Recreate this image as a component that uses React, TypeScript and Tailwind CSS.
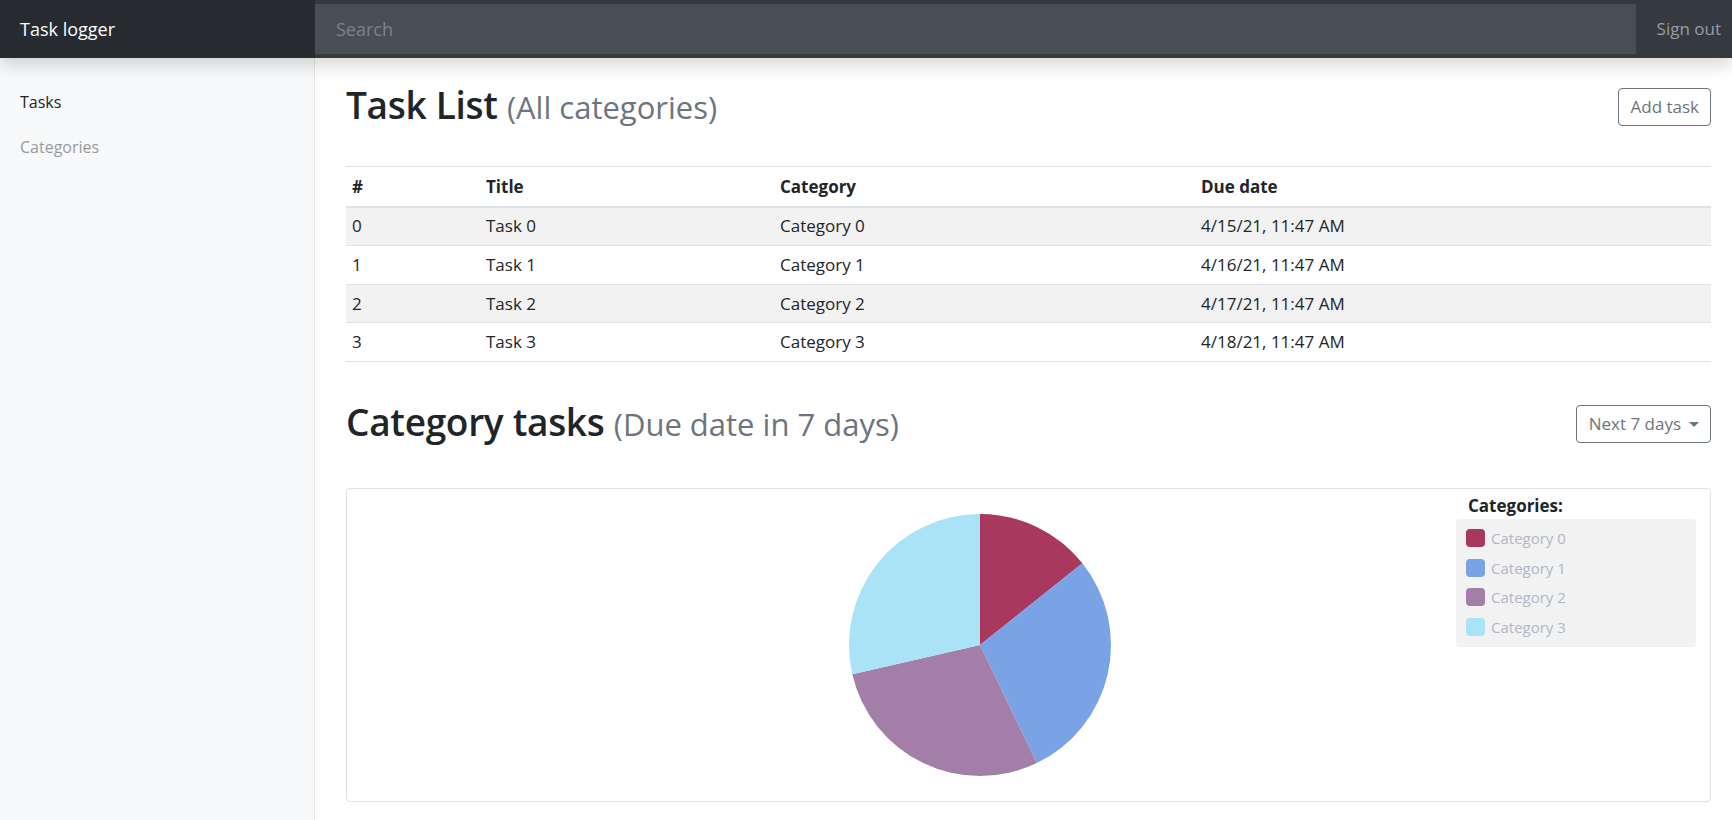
import React from "react";

const tasks = [0, 1, 2, 3].map((i) => ({
  id: i,
  title: `Task ${i}`,
  category: `Category ${i}`,
  due: `4/${15 + i}/21, 11:47 AM`,
}));

const slices = [
  { name: "Category 0", value: 1, color: "#a8385d" },
  { name: "Category 1", value: 2, color: "#7aa3e5" },
  { name: "Category 2", value: 2, color: "#a27ea8" },
  { name: "Category 3", value: 2, color: "#aae3f5" },
];

const Pie = ({ r }: { r: number }) => {
  const total = slices.reduce((s, x) => s + x.value, 0);
  let acc = 0;
  const pt = (a: number) => [r + r * Math.sin(a), r - r * Math.cos(a)];
  return (
    <svg width={r * 2} height={r * 2} viewBox={`0 0 ${r * 2} ${r * 2}`}>
      {slices.map((s) => {
        const a0 = (acc / total) * Math.PI * 2;
        acc += s.value;
        const a1 = (acc / total) * Math.PI * 2;
        const [x0, y0] = pt(a0);
        const [x1, y1] = pt(a1);
        const large = a1 - a0 > Math.PI ? 1 : 0;
        return (
          <path
            key={s.name}
            d={`M${r},${r} L${x0},${y0} A${r},${r} 0 ${large} 1 ${x1},${y1} Z`}
            fill={s.color}
          />
        );
      })}
    </svg>
  );
};

const App = () => {
  return (
    <div
      className="w-full h-[820px] overflow-hidden bg-white text-[#212529] text-[17px]"
      style={{ fontFamily: '"Open Sans", "Noto Sans", sans-serif' }}
    >
      {/* Navbar */}
      <header className="relative z-10 flex h-[58px] bg-[#343a40] shadow-[0_8px_16px_rgba(0,0,0,0.15)]">
        <div className="flex w-[315px] shrink-0 items-center bg-[#272b30] px-5 text-[18px] text-white">
          Task logger
        </div>
        <div className="flex flex-1 py-[4px]">
          <input
            className="w-full bg-[#484e53] px-[21px] text-[18px] text-white outline-none placeholder:text-[#7d8388]"
            placeholder="Search"
          />
        </div>
        <div className="flex items-center px-[11px] pl-[21px] text-[17px] text-[#9a9da1]">
          Sign out
        </div>
      </header>

      <div className="flex h-[762px]">
        {/* Sidebar */}
        <nav className="w-[315px] shrink-0 bg-[#f8f9fa] border-r border-[#e3e4e6] pt-[21px]">
          <div className="flex h-[45px] items-center px-5 text-[16px] text-[#212529]">Tasks</div>
          <div className="flex h-[45px] items-center px-5 text-[16px] text-[#999999]">Categories</div>
        </nav>

        {/* Main */}
        <main className="flex-1 pl-[31px] pr-[21px] pt-[30px]">
          <div className="flex h-[38px] items-center justify-between">
            <h1 className="mb-[5px] text-[37px] font-semibold leading-none tracking-[-0.3px]">
              Task List{" "}
              <span className="text-[31px] font-normal tracking-normal text-[#6c757d]">(All categories)</span>
            </h1>
            <button className="h-[38px] rounded-[4px] border border-[#6c757d] px-[11px] text-[17px] text-[#6c757d]">
              Add task
            </button>
          </div>

          <table className="mt-[40px] w-full border-collapse text-left text-[17px]">
            <thead>
              <tr className="h-[40px] border-t border-b-2 border-[#dee2e6]">
                <th className="w-[134px] px-[6px] font-bold">#</th>
                <th className="w-[294px] px-[6px] font-bold">Title</th>
                <th className="w-[421px] px-[6px] font-bold">Category</th>
                <th className="px-[6px] font-bold">Due date</th>
              </tr>
            </thead>
            <tbody>
              {tasks.map((t) => (
                <tr
                  key={t.id}
                  className={`h-[38.75px] border-b border-[#dee2e6] ${t.id % 2 === 0 ? "bg-[#f2f2f2]" : "bg-white"}`}
                >
                  <td className="px-[6px]">{t.id}</td>
                  <td className="px-[6px]">{t.title}</td>
                  <td className="px-[6px]">{t.category}</td>
                  <td className="px-[6px]">{t.due}</td>
                </tr>
              ))}
            </tbody>
          </table>

          <div className="mt-[43px] flex h-[38px] items-center justify-between">
            <h2 className="mb-[5px] text-[37px] font-semibold leading-none tracking-[-0.3px]">
              Category tasks{" "}
              <span className="text-[31px] font-normal tracking-normal text-[#6c757d]">(Due date in 7 days)</span>
            </h2>
            <button className="flex h-[38px] items-center gap-[8px] rounded-[4px] border border-[#6c757d] pl-[12px] pr-[11px] text-[17px] text-[#6c757d]">
              Next 7 days
              <span className="h-0 w-0 border-x-[5px] border-t-[5px] border-x-transparent border-t-[#6c757d]" />
            </button>
          </div>

          {/* Chart card */}
          <div className="mt-[45px] flex h-[314px] rounded-[4px] border border-[#dee2e6]">
            <div className="flex-1 pl-[502px] pt-[25px]">
              <Pie r={131} />
            </div>
            <div className="mr-[14px] w-[240px] pt-[4px]">
              <div className="px-[12px] text-[17px] font-bold leading-[26px]">Categories:</div>
              <div className="rounded-[4px] bg-[#f2f2f2] px-[10px] pt-[10px]">
                {slices.map((s) => (
                  <div key={s.name} className="flex h-[29.5px] items-start gap-[6px]">
                    <span className="h-[18px] w-[19px] rounded-[4px]" style={{ backgroundColor: s.color }} />
                    <span className="text-[15px] leading-[18px] text-[#b0b7c8]">{s.name}</span>
                  </div>
                ))}
              </div>
            </div>
          </div>
        </main>
      </div>
    </div>
  );
};

export default App;
